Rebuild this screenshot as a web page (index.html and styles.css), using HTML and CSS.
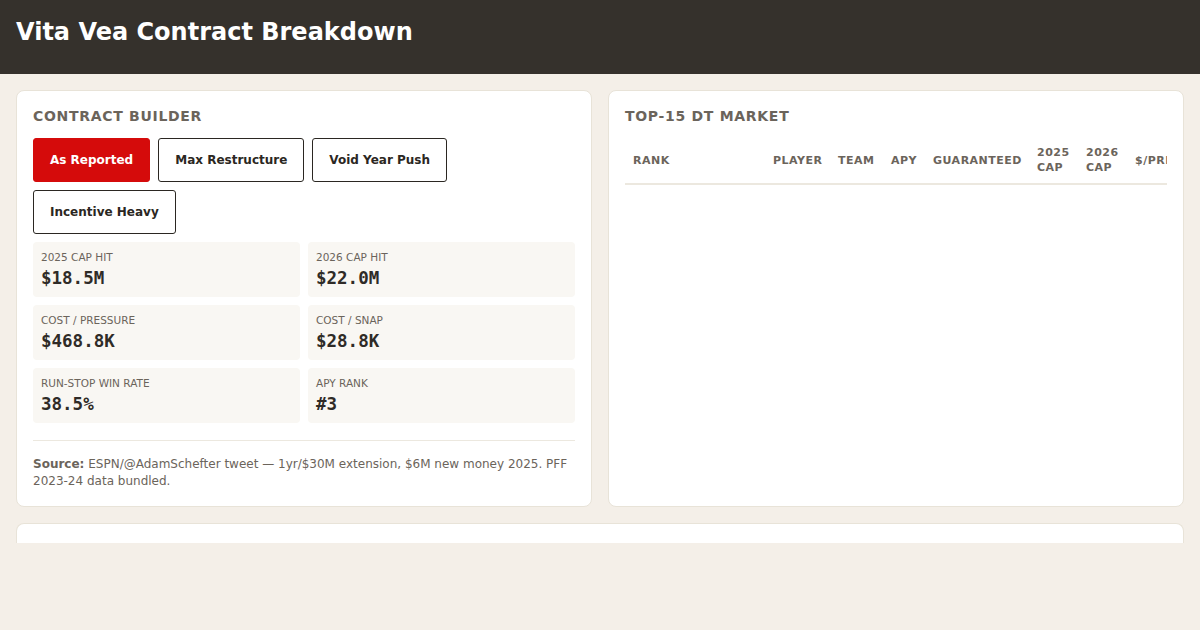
FILE: index.html
```html
<!DOCTYPE html>
<html lang="en">
<head>
    <meta charset="UTF-8">
    <meta name="viewport" content="width=device-width, initial-scale=1.0">
    <title>Vita Vea Contract Breakdown</title>
    <link rel="stylesheet" href="styles.css">
</head>
<body>
    <header class="topbar">
        <h1>Vita Vea Contract Breakdown</h1>
    </header>
    <main class="layout">
        <section class="card">
            <h2>Contract Builder</h2>
            <div class="scenarios">
                <button class="active">As Reported</button>
                <button>Max Restructure</button>
                <button>Void Year Push</button>
                <button>Incentive Heavy</button>
            </div>
            <div class="stats">
                <div class="stat">
                    <span class="label">2025 Cap Hit</span>
                    <span class="value">$18.5M</span>
                </div>
                <div class="stat">
                    <span class="label">2026 Cap Hit</span>
                    <span class="value">$22.0M</span>
                </div>
                <div class="stat">
                    <span class="label">Cost / Pressure</span>
                    <span class="value">$468.8K</span>
                </div>
                <div class="stat">
                    <span class="label">Cost / Snap</span>
                    <span class="value">$28.8K</span>
                </div>
                <div class="stat">
                    <span class="label">Run-Stop Win Rate</span>
                    <span class="value">38.5%</span>
                </div>
                <div class="stat">
                    <span class="label">APY Rank</span>
                    <span class="value">#3</span>
                </div>
            </div>
            <p class="source"><strong>Source:</strong> ESPN/@AdamSchefter tweet — 1yr/$30M extension, $6M new money 2025. PFF 2023-24 data bundled.</p>
        </section>
        <section class="card">
            <h2>Top-15 DT Market</h2>
            <div class="table-wrap">
                <table class="market">
                    <thead>
                        <tr>
                            <th class="c-rank">Rank</th>
                            <th class="c-player">Player</th>
                            <th class="c-team">Team</th>
                            <th class="c-apy">APY</th>
                            <th class="c-gtd">Guaranteed</th>
                            <th class="c-cap">2025 Cap</th>
                            <th class="c-cap">2026 Cap</th>
                            <th class="c-rate">$/Pressure</th>
                            <th class="c-rate">$/Snap</th>
                        </tr>
                    </thead>
                    <tbody id="market-rows"></tbody>
                </table>
            </div>
        </section>
        <section class="card wide"></section>
    </main>
</body>
</html>
```

FILE: styles.css
```css
* {
    margin: 0;
    padding: 0;
    box-sizing: border-box;
    font-family: "DejaVu Sans", Verdana, sans-serif;
}
body {
    background-color: #f4efe8;
    color: #2b2722;
    height: 630px;
    overflow: hidden;
}
.topbar {
    background-color: #35312c;
    color: white;
    padding: 18px 16px 28px;
}
.topbar h1 {
    font-size: 24px;
    line-height: 28px;
    font-weight: bold;
}
.layout {
    display: grid;
    grid-template-columns: 1fr 1fr;
    gap: 16px;
    padding: 16px;
}
.card {
    background: white;
    border: 1px solid #e8e3d8;
    border-radius: 8px;
    padding: 16px;
    min-width: 0;
}
.card h2 {
    font-size: 14px;
    line-height: 18px;
    letter-spacing: 0.7px;
    text-transform: uppercase;
    color: #6b645b;
    margin-bottom: 13px;
}
.card.wide {
    grid-column: 1 / 3;
    height: 20px;
    padding: 0;
    border-bottom: none;
    border-radius: 8px 8px 0 0;
}
.scenarios {
    display: flex;
    flex-wrap: wrap;
    gap: 8px;
    margin-bottom: 8px;
}
.scenarios button {
    background-color: white;
    color: #2b2722;
    border: 1px solid #2b2722;
    border-radius: 3px;
    padding: 13px 16px;
    font-size: 12px;
    line-height: 16px;
    font-weight: bold;
    cursor: pointer;
}
.scenarios button.active {
    background-color: #d50b0b;
    border-color: #d50b0b;
    color: white;
}
.stats {
    display: grid;
    grid-template-columns: 1fr 1fr;
    gap: 8px;
}
.stat {
    background-color: #f9f7f3;
    border-radius: 4px;
    padding: 8px;
    display: flex;
    flex-direction: column;
    gap: 3px;
}
.stat .label {
    font-size: 10.5px;
    line-height: 14px;
    text-transform: uppercase;
    color: #6b645b;
}
.stat .value {
    font-family: "DejaVu Sans Mono", monospace;
    font-size: 17.5px;
    line-height: 22px;
    font-weight: bold;
    color: #2f2b27;
}
.source {
    margin-top: 17px;
    border-top: 1px solid #ece8df;
    padding-top: 15px;
    font-size: 12px;
    line-height: 17px;
    color: #6b645b;
}
.table-wrap {
    overflow: hidden;
}
.market {
    table-layout: fixed;
    width: 671px;
    border-collapse: collapse;
}
.market th {
    font-size: 11px;
    line-height: 15px;
    letter-spacing: 0.5px;
    text-transform: uppercase;
    text-align: left;
    color: #6b645b;
    padding: 7px 8px 8px;
    border-bottom: 2px solid #ece8df;
}
.market .c-rank { width: 140px; }
.market .c-player { width: 65px; }
.market .c-team { width: 53px; }
.market .c-apy { width: 42px; }
.market .c-gtd { width: 104px; }
.market .c-cap { width: 49px; }
.market .c-rate { width: 85px; }
```
